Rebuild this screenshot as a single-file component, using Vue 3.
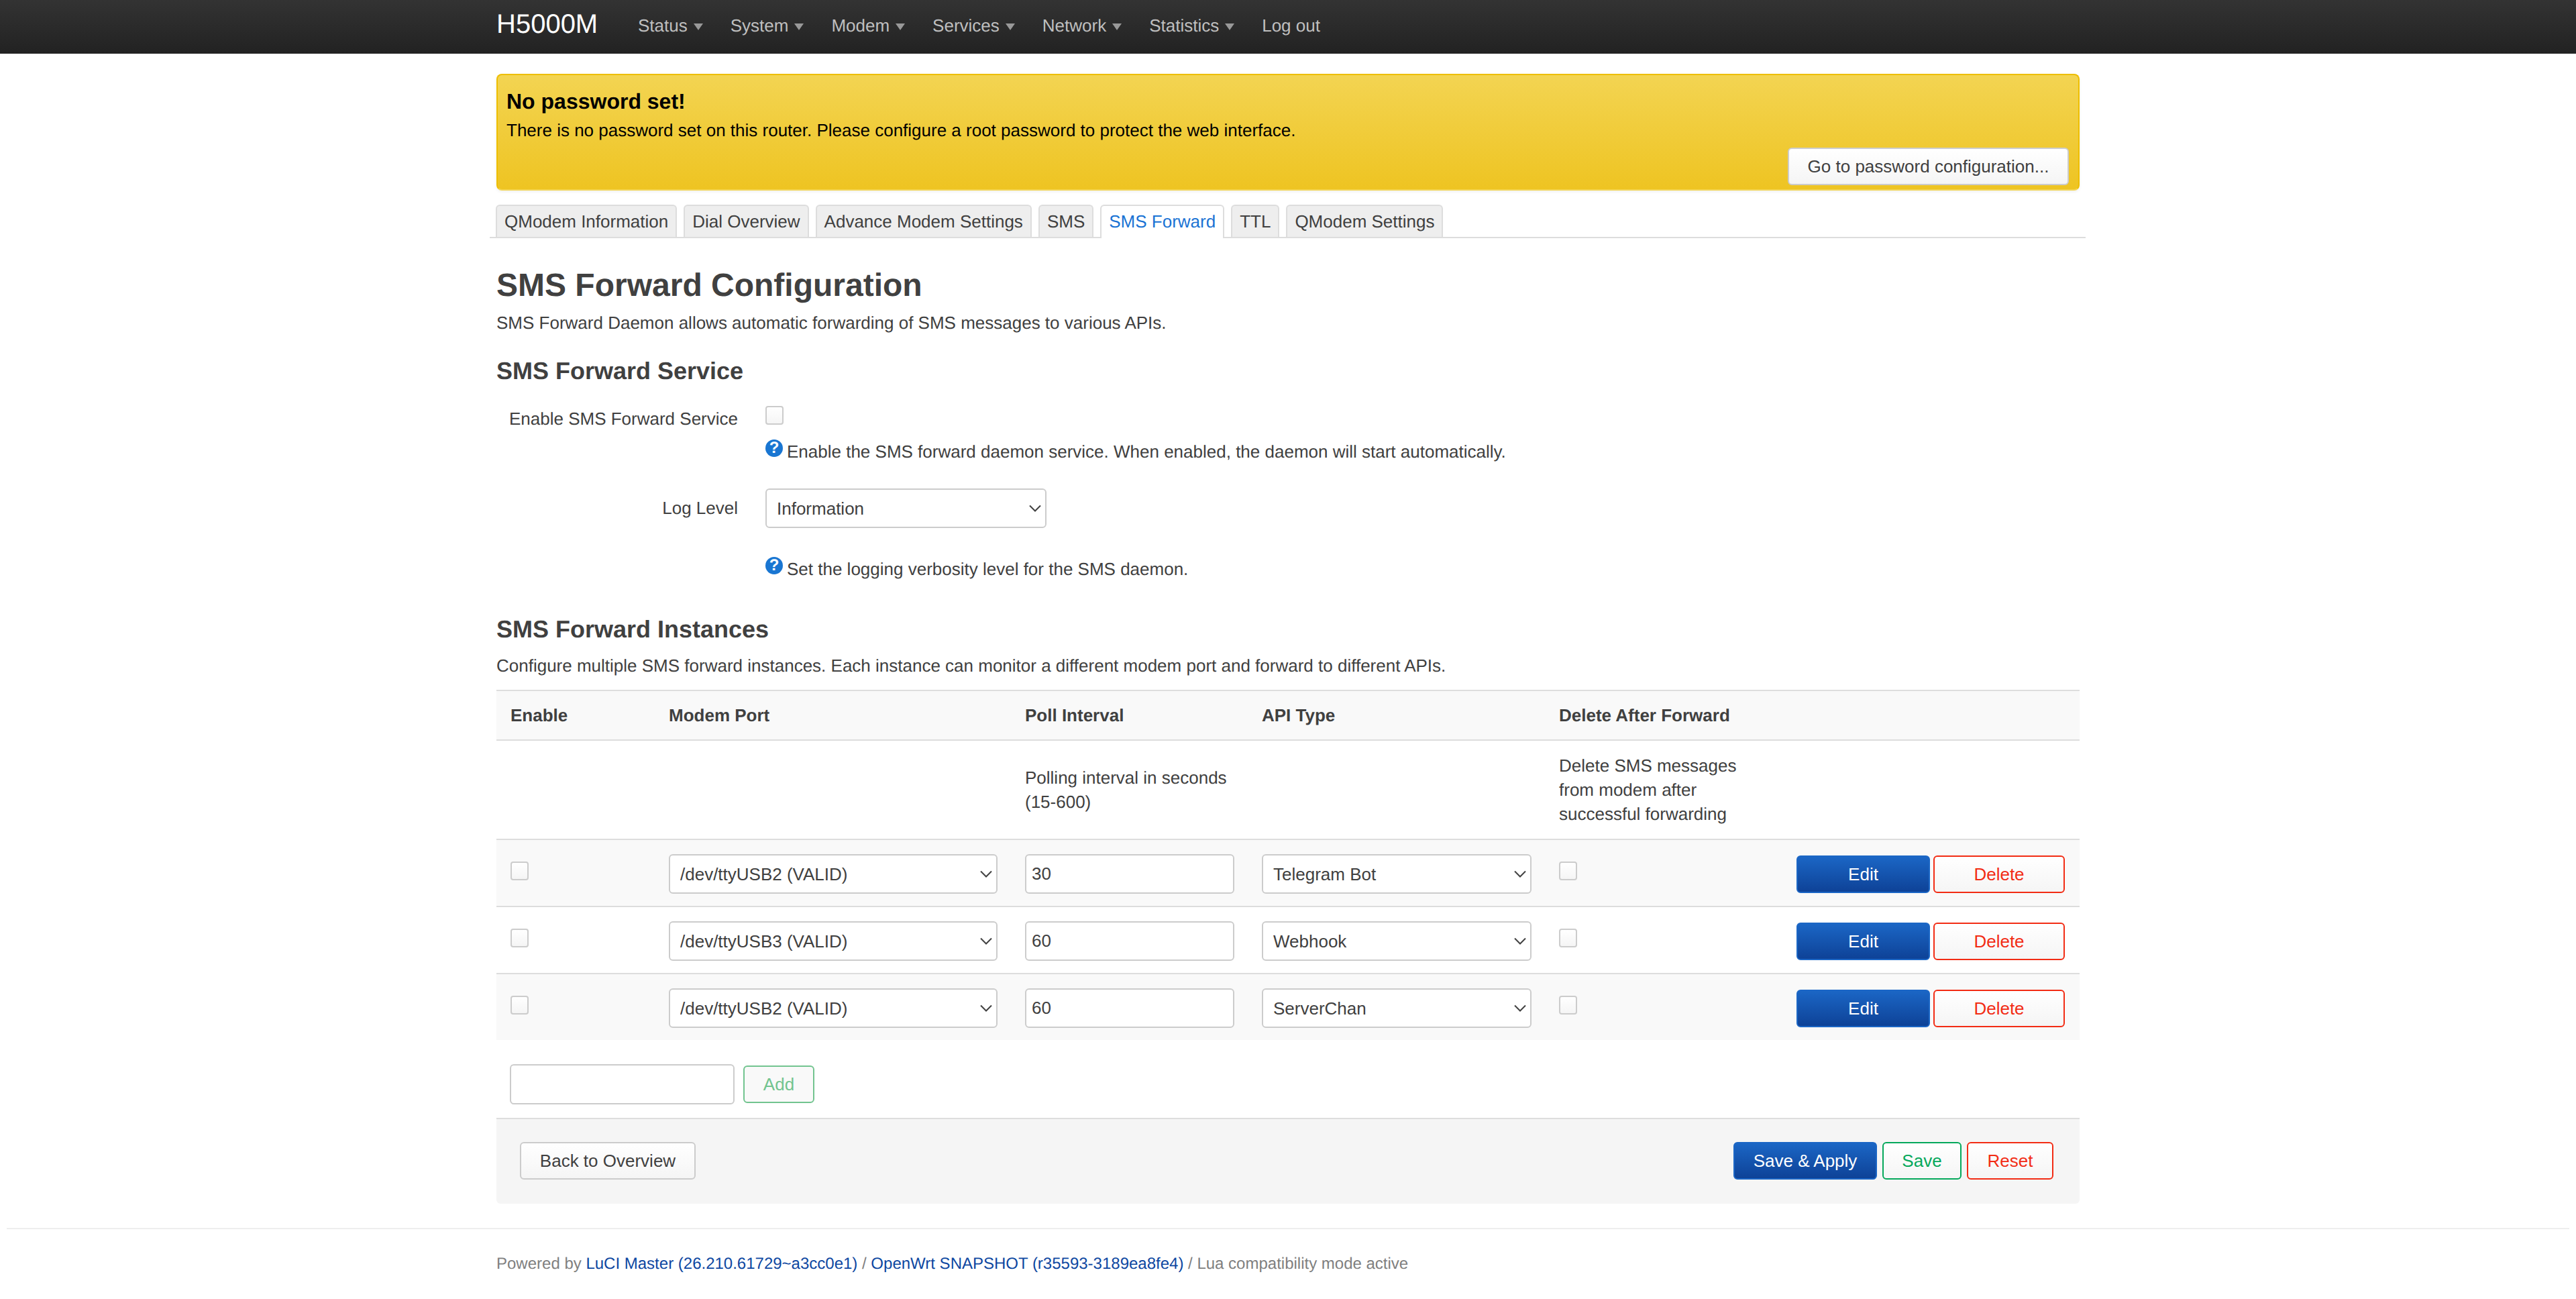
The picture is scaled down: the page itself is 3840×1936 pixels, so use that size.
<template>
  <div class="page">
    <header class="topbar">
      <div class="wrap topbar-inner">
        <a class="brand">H5000M</a>
        <ul class="nav">
          <li v-for="item in navItems" :key="item">{{ item }}<span class="caret"></span></li>
          <li>Log out</li>
        </ul>
      </div>
    </header>

    <main class="wrap">
      <div class="alert">
        <h4>No password set!</h4>
        <p>There is no password set on this router. Please configure a root password to protect the web interface.</p>
        <button class="btn goto">Go to password configuration...</button>
      </div>

      <ul class="tabs">
        <li v-for="tab in tabs" :key="tab" :class="{ active: tab === 'SMS Forward' }">{{ tab }}</li>
      </ul>

      <h2>SMS Forward Configuration</h2>
      <p class="desc">SMS Forward Daemon allows automatic forwarding of SMS messages to various APIs.</p>

      <h3 class="service-title">SMS Forward Service</h3>
      <div class="form-row first">
        <label class="form-label">Enable SMS Forward Service</label>
        <div>
          <input type="checkbox" class="check" />
          <div class="help help-check">
            <span class="help-icon">?</span>Enable the SMS forward daemon service. When enabled, the daemon will start automatically.
          </div>
        </div>
      </div>
      <div class="form-row second">
        <label class="form-label tall">Log Level</label>
        <div>
          <select class="select log-level">
            <option>Information</option>
          </select>
          <div class="help help-select">
            <span class="help-icon">?</span>Set the logging verbosity level for the SMS daemon.
          </div>
        </div>
      </div>

      <h3 class="instances-title">SMS Forward Instances</h3>
      <p class="desc instances-desc">Configure multiple SMS forward instances. Each instance can monitor a different modem port and forward to different APIs.</p>

      <table class="instances">
        <colgroup>
          <col class="c-enable" />
          <col class="c-port" />
          <col class="c-poll" />
          <col class="c-api" />
          <col class="c-delete" />
          <col />
        </colgroup>
        <thead>
          <tr>
            <th>Enable</th>
            <th>Modem Port</th>
            <th>Poll Interval</th>
            <th>API Type</th>
            <th>Delete After Forward</th>
            <th></th>
          </tr>
        </thead>
        <tbody>
          <tr class="descr-row">
            <td></td>
            <td></td>
            <td>Polling interval in seconds (15-600)</td>
            <td></td>
            <td>Delete SMS messages from modem after successful forwarding</td>
            <td></td>
          </tr>
          <tr v-for="(row, index) in instances" :key="index" class="data-row">
            <td class="check-cell"><input type="checkbox" class="check" /></td>
            <td>
              <select class="select full"><option>{{ row.port }}</option></select>
            </td>
            <td><input class="input full" :value="row.poll" /></td>
            <td>
              <select class="select full"><option>{{ row.api }}</option></select>
            </td>
            <td class="check-cell"><input type="checkbox" class="check" /></td>
            <td>
              <div class="row-actions">
                <button class="btn primary edit">Edit</button>
                <button class="btn danger remove">Delete</button>
              </div>
            </td>
          </tr>
        </tbody>
      </table>

      <div class="add-row">
        <input class="input add-input" />
        <button class="btn add">Add</button>
      </div>

      <div class="actions">
        <button class="btn back">Back to Overview</button>
        <div class="actions-right">
          <button class="btn primary apply">Save &amp; Apply</button>
          <button class="btn positive save">Save</button>
          <button class="btn danger reset">Reset</button>
        </div>
      </div>
    </main>

    <footer class="footer">
      <div class="wrap footer-text">
        Powered by <a>LuCI Master (26.210.61729~a3cc0e1)</a> / <a>OpenWrt SNAPSHOT (r35593-3189ea8fe4)</a> / Lua compatibility mode active
      </div>
    </footer>
  </div>
</template>

<script setup>
const navItems = ['Status', 'System', 'Modem', 'Services', 'Network', 'Statistics']

const tabs = [
  'QModem Information',
  'Dial Overview',
  'Advance Modem Settings',
  'SMS',
  'SMS Forward',
  'TTL',
  'QModem Settings'
]

const instances = [
  { port: '/dev/ttyUSB2 (VALID)', poll: '30', api: 'Telegram Bot' },
  { port: '/dev/ttyUSB3 (VALID)', poll: '60', api: 'Webhook' },
  { port: '/dev/ttyUSB2 (VALID)', poll: '60', api: 'ServerChan' }
]
</script>

<style>
body {
  background: #fff;
}
</style>

<style scoped>
.page {
  font-family: "Liberation Sans", Arial, sans-serif;
  font-size: 26px;
  line-height: 36px;
  color: #404040;
  text-rendering: geometricPrecision;
}

.wrap {
  width: 2360px;
  margin: 0 auto;
}

/* top bar */
.topbar {
  height: 80px;
  background: linear-gradient(#333, #222);
}

.topbar-inner {
  display: flex;
  align-items: center;
  height: 80px;
}

.brand {
  font-size: 40px;
  color: #fff;
  width: 211px;
  flex: none;
  padding-bottom: 8px;
}

.nav {
  display: flex;
  gap: 41px;
  margin: 0;
  padding: 0 0 4px;
  list-style: none;
  color: #bfbfbf;
}

.caret {
  display: inline-block;
  margin-left: 9px;
  vertical-align: middle;
  border-top: 10px solid #999;
  border-left: 7px solid transparent;
  border-right: 7px solid transparent;
}

/* alert */
.alert {
  display: flex;
  flex-direction: column;
  box-sizing: border-box;
  height: 174px;
  margin-top: 30px;
  padding: 20px 14px 6px 13px;
  border: 2px solid #eebe00;
  border-bottom-color: #f3d452;
  border-radius: 8px;
  background: linear-gradient(#f3d452, #eec422);
  color: #000;
  box-shadow: 0 2px 4px rgba(0, 0, 0, 0.06);
}

.alert h4 {
  margin: 0;
  font-size: 32px;
  line-height: 38px;
  font-weight: bold;
}

.alert p {
  margin: 6px 0 0;
}

.goto {
  align-self: flex-end;
  margin-top: auto;
  width: 419px;
}

/* tabs */
.tabs {
  display: flex;
  gap: 10px;
  margin: 21px -9px 0 -10px;
  padding: 0 0 0 9px;
  list-style: none;
  border-bottom: 2px solid #ddd;
  height: 48px;
}

.tabs li {
  box-sizing: border-box;
  height: 48px;
  padding: 0 11px;
  line-height: 46px;
  background: #eee;
  border: 2px solid #ddd;
  border-bottom: 0;
  border-radius: 6px 6px 0 0;
}

.tabs li.active {
  height: 50px;
  background: #fff;
  color: #1a73d4;
}

/* headings */
h2 {
  margin: 35px 0 1px;
  font-size: 48px;
  line-height: 72px;
}

h3 {
  margin: 0;
  font-size: 36px;
  line-height: 54px;
}

.desc {
  margin: 0;
}

.service-title {
  margin-top: 27px;
}

.instances-title {
  margin-top: 45px;
}

.instances-desc {
  margin-top: 9px;
}

/* form */
.form-row {
  display: grid;
  grid-template-columns: 360px 1fr;
  column-gap: 41px;
}

.form-row.first {
  margin-top: 25px;
}

.form-row.second {
  margin-top: 37px;
}

.form-label {
  padding-top: 1px;
  text-align: right;
}

.form-label.tall {
  padding-top: 0;
  line-height: 59px;
}

.help {
  display: flex;
  align-items: center;
  height: 36px;
}

.help-check {
  margin-top: 22px;
}

.help-select {
  margin-top: 43px;
}

.help-icon {
  flex: none;
  box-sizing: border-box;
  width: 26px;
  height: 26px;
  margin: -10px 6px 0 0;
  border-radius: 50%;
  background: #1976d2;
  color: #fff;
  font-size: 24px;
  font-weight: bold;
  line-height: 26px;
  text-align: center;
}

/* inputs */
.check {
  display: block;
  box-sizing: border-box;
  width: 27px;
  height: 28px;
  margin: 0;
  appearance: none;
  border: 2px solid #ccc;
  border-radius: 4px;
  background: linear-gradient(#fff, #f5f5f5);
}

.select,
.input {
  display: block;
  box-sizing: border-box;
  height: 59px;
  margin: 0;
  border: 2px solid #ccc;
  border-radius: 6px;
  background-color: #fff;
  font: inherit;
  color: #404040;
}

.select {
  appearance: none;
  padding: 0 40px 0 15px;
  background-image: url("data:image/svg+xml,%3Csvg xmlns='http://www.w3.org/2000/svg' width='18' height='12' viewBox='0 0 18 12'%3E%3Cpath d='M1 1.5 9 9.5l8-8' fill='none' stroke='%23404040' stroke-width='2'/%3E%3C/svg%3E");
  background-repeat: no-repeat;
  background-position: right 6px center;
}

.input {
  padding: 0 8px;
  outline: none;
}

.log-level {
  width: 419px;
}

.full {
  width: 100%;
}

/* table */
.instances {
  width: 100%;
  margin-top: 18px;
  border-collapse: separate;
  border-spacing: 0;
  table-layout: fixed;
}

.c-enable { width: 236px; }
.c-port { width: 531px; }
.c-poll { width: 353px; }
.c-api { width: 443px; }
.c-delete { width: 350px; }

.instances th {
  height: 72px;
  padding: 0 21px;
  border-top: 2px solid #ddd;
  background: #f9f9f9;
  font-weight: bold;
  text-align: left;
}

.instances td {
  padding: 21px 20px 18px 21px;
  border-top: 2px solid #ddd;
  vertical-align: middle;
}

.descr-row td {
  padding-top: 19px;
  padding-bottom: 19px;
}

.data-row:nth-child(even) td {
  background: #f9f9f9;
}

.instances td.check-cell {
  vertical-align: top;
  padding-top: 32px;
}

.row-actions {
  display: flex;
  justify-content: flex-end;
  gap: 5px;
  margin-right: 2px;
}

/* buttons */
.btn {
  box-sizing: border-box;
  height: 56px;
  padding: 0;
  border: 2px solid #ccc;
  border-radius: 6px;
  background: linear-gradient(#fff, #f5f5f5);
  font: inherit;
  color: #404040;
}

.btn.primary {
  border-color: #1b66c5;
  background: linear-gradient(#1b66c5, #0e4297);
  color: #fff;
}

.btn.danger {
  border-color: #f22c14;
  color: #f22c14;
}

.btn.positive {
  border-color: #05a85b;
  color: #05a85b;
}

.edit { width: 199px; }
.remove { width: 196px; }
.apply { width: 214px; }
.save { width: 118px; }
.reset { width: 129px; }
.back { width: 262px; }

.add-row {
  display: flex;
  align-items: center;
  gap: 13px;
  margin-top: 36px;
  padding-left: 20px;
}

.add-input {
  width: 335px;
  height: 60px;
}

.btn.add {
  width: 106px;
  border-color: #72c48f;
  background: #f9f9f9;
  color: #72c48f;
}

.actions {
  display: flex;
  justify-content: space-between;
  margin-top: 20px;
  padding: 34px 39px 36px 35px;
  border-top: 2px solid #ddd;
  border-radius: 0 0 6px 6px;
  background: #f5f5f5;
}

.actions-right {
  display: flex;
  gap: 8px;
}

/* footer */
.footer {
  margin: 36px 10px 0;
  padding: 34px 0;
  border-top: 2px solid #eee;
  color: #808080;
  font-size: 24px;
}

.footer-text {
  width: 2360px;
}

.footer a {
  color: #0d47a1;
}
</style>
